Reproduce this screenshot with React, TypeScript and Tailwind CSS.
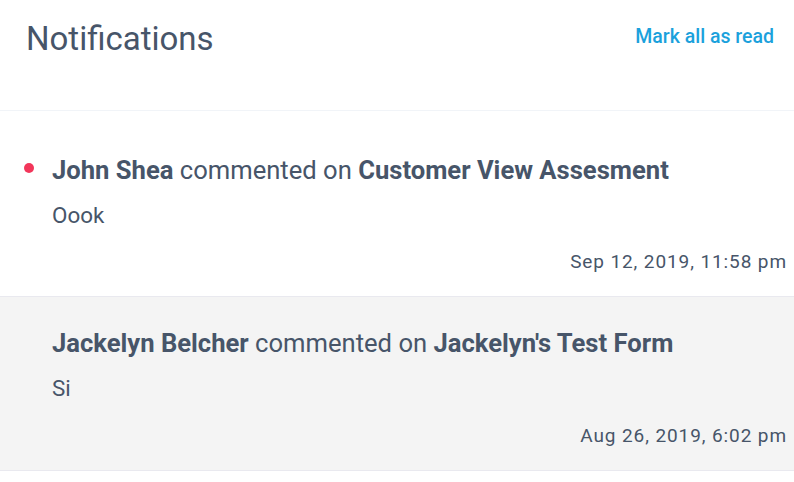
const notifications = [
  {
    id: 1,
    author: "John Shea",
    form: "Customer View Assesment",
    body: "Oook",
    date: "Sep 12, 2019, 11:58 pm",
    unread: true,
  },
  {
    id: 2,
    author: "Jackelyn Belcher",
    form: "Jackelyn's Test Form",
    body: "Si",
    date: "Aug 26, 2019, 6:02 pm",
    unread: false,
  },
];

export default function App() {
  return (
    <div className="w-[794px] h-[482px] bg-white overflow-hidden font-['Roboto',sans-serif] text-[#475569]">
      {/* Header */}
      <div className="flex items-start justify-between h-[111px] border-b border-[#f1f4f8] pl-[26px] pr-[20px] pt-[18px]">
        <h1 className="text-[33px] leading-[42px] font-normal text-[#475569]">Notifications</h1>
        <button className="mt-[7px] text-[19.5px] leading-[24px] font-medium text-[#1ba1dc]">Mark all as read</button>
      </div>

      {/* List */}
      <ul>
        {notifications.map((n) => (
          <li
            key={n.id}
            className={
              n.unread
                ? "relative border-b border-[#e9e9ef] bg-white pt-[43px] pb-[21px] pl-[52px] pr-[7px]"
                : "relative border-b border-[#e9e9ef] bg-[#f4f4f4] pt-[30px] pb-[21px] pl-[52px] pr-[7px]"
            }
          >
            {n.unread && (
              <span className="absolute left-[24px] top-[52px] h-[10px] w-[10px] rounded-full bg-[#f2365a]" />
            )}
            <p className="text-[25.6px] leading-[32px]">
              <span className="font-bold">{n.author}</span> commented on{" "}
              <span className="font-bold">{n.form}</span>
            </p>
            <p className="mt-[14px] text-[22.4px] leading-[30px]">{n.body}</p>
            <p
              className={
                n.unread
                  ? "mt-[19px] text-right text-[19px] leading-[26px] tracking-[0.9px]"
                  : "mt-[20px] text-right text-[19px] leading-[26px] tracking-[0.9px]"
              }
            >
              {n.date}
            </p>
          </li>
        ))}
      </ul>
    </div>
  );
}
